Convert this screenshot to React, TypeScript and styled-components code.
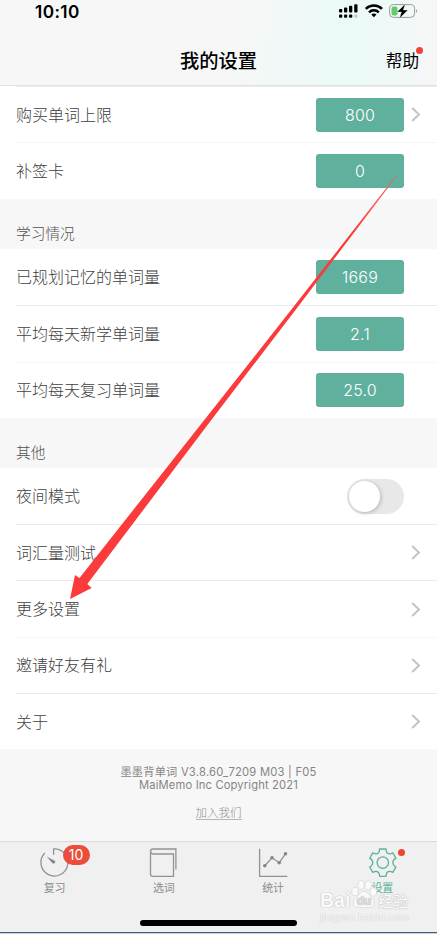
import React from 'react';
import styled, { createGlobalStyle } from 'styled-components';

const GlobalStyle = createGlobalStyle`
  *, *::before, *::after { box-sizing: border-box; }
  body { margin: 0; background: #fff; }
`;

const Screen = styled.div`
  position: relative;
  display: flex;
  flex-direction: column;
  width: 437px;
  height: 934px;
  overflow: hidden;
  background: #fff;
  font-family: Inter, 'Noto Sans CJK SC', sans-serif;
  color: #505050;
`;

const Header = styled.header`
  flex: none;
  height: 86px;
  border-bottom: 1px solid #e2e2e2;
  background: linear-gradient(93deg, #f7f7f7 0%, #f7f7f7 52%, #f1f8f7 65%, #eafaf7 78%, #edf9f7 86%, #f6f7f7 100%);
`;

const StatusBar = styled.div`
  display: flex;
  justify-content: space-between;
  height: 36px;
  padding: 0 19px 0 35px;
`;

const Clock = styled.span`
  font-size: 17.2px;
  line-height: 23px;
  font-weight: 600;
  letter-spacing: 0.4px;
  color: #000;
`;

const StatusIcons = styled.svg`
  display: block;
  width: 80px;
  height: 22px;
`;

const NavBar = styled.div`
  display: grid;
  grid-template-columns: 1fr auto 1fr;
  align-items: center;
  height: 50px;
  padding: 0 18px;
  color: #000;
`;

const Title = styled.h1`
  grid-column: 2;
  margin: 0;
  font-size: 19.3px;
  line-height: 28px;
  font-weight: 500;
`;

const Help = styled.span`
  position: relative;
  justify-self: end;
  font-size: 16.6px;
  line-height: 24px;
`;

const Dot = styled.i<{ $top: number; $right: number }>`
  position: absolute;
  top: ${(p) => p.$top}px;
  right: ${(p) => p.$right}px;
  width: 7px;
  height: 7px;
  border-radius: 50%;
  background: #ee4533;
`;

const Group = styled.section`
  flex: none;
`;

const FirstGroup = styled(Group)`
  padding-bottom: 0.4px;
`;

const GroupHeading = styled.h2`
  display: flex;
  align-items: flex-end;
  height: 49.6px;
  margin: 0;
  padding: 0 16px 4px;
  background: #f7f7f7;
  font-size: 14.7px;
  line-height: 22px;
  font-weight: 300;
`;

const dividers = { none: 'transparent', faint: '#f6f6f6', solid: '#ebebeb' };

const Row = styled.div<{ $divider: keyof typeof dividers }>`
  display: flex;
  align-items: center;
  height: 56.4px;
  margin-left: 16px;
  padding-right: 16px;
  border-top: 1px solid ${(p) => dividers[p.$divider]};
`;

const RowLabel = styled.span`
  flex: 1;
  font-size: 16px;
  line-height: 24px;
  font-weight: 300;
  color: #404040;
`;

const Value = styled.span`
  width: 88px;
  height: 34px;
  border-radius: 3px;
  background: #5fb19e;
  color: #fff;
  font-size: 16px;
  line-height: 34px;
  font-weight: 300;
  letter-spacing: 0.2px;
  text-align: center;
`;

const Switch = styled.span`
  width: 57px;
  height: 35px;
  padding: 2px;
  border-radius: 18px;
  background: #e8e8e8;
`;

const Knob = styled.span`
  display: block;
  width: 31px;
  height: 31px;
  border-radius: 50%;
  background: #fff;
  box-shadow: 1px 1px 4px rgba(0, 0, 0, 0.22);
`;

const Accessory = styled.span`
  display: flex;
  justify-content: flex-end;
  width: 17px;
`;

const Footer = styled.footer`
  flex: none;
  display: flex;
  flex-direction: column;
  align-items: center;
  height: 91.4px;
  padding-top: 16.4px;
  background: #f7f7f7;
  color: #858585;
  font-size: 11.2px;
  line-height: 13px;
`;

const FooterLine = styled.span<{ $spacing: number }>`
  letter-spacing: ${(p) => p.$spacing}px;
  white-space: nowrap;
`;

const JoinLink = styled.a`
  margin-top: 15px;
  border-bottom: 1px solid #b5b5b5;
  color: #8c8c8c;
  font-size: 11.5px;
  line-height: 12.6px;
  font-weight: 300;
`;

const TabBar = styled.nav`
  flex: none;
  display: grid;
  grid-template-columns: repeat(4, 1fr);
  height: 79px;
  border-top: 1px solid #dadada;
  background: #f0f0f0;
`;

const Tab = styled.div<{ $active?: boolean }>`
  display: flex;
  flex-direction: column;
  align-items: center;
  padding-top: 5px;
  color: ${(p) => (p.$active ? '#5bb29d' : '#8c8c8c')};
  font-size: 11px;
  line-height: 16px;
`;

const TabIcon = styled.span`
  position: relative;
  display: block;
  width: 32px;
  height: 33px;

  svg { display: block; }
`;

const Badge = styled.b`
  position: absolute;
  left: 24px;
  top: -2px;
  width: 27px;
  height: 20px;
  border-radius: 10px;
  background: #ec4c3a;
  color: #fff;
  font-size: 14px;
  line-height: 20px;
  font-weight: 400;
  text-align: center;
`;

const HomeArea = styled.div`
  flex: 1;
  padding-left: 140px;
  border-bottom: 1px solid #c3d0e0;
  box-shadow: inset 0 -1px #4c5c70;
  background: #f0f0f0;
`;

const HomeIndicator = styled.div`
  width: 157px;
  height: 6px;
  border-radius: 3px;
  background: #000;
`;

const Watermark = styled.div`
  position: absolute;
  left: 320px;
  top: 880px;
  width: 92px;
  color: #fafafa;
  text-shadow: 0 0 1px #bcbcbc, 0 0 1px #c8c8c8, 0 0 1px #c8c8c8;
`;

const WatermarkBrand = styled.div`
  display: flex;
  align-items: flex-end;
  height: 33px;
  font-family: 'Liberation Sans', sans-serif;
  font-size: 19.5px;
  line-height: 25px;
  font-weight: 700;
`;

const WatermarkPaw = styled.svg`
  flex: none;
  width: 27px;
  height: 30px;
  margin: 0 0 4px;
`;

const WatermarkCn = styled.span`
  margin-left: 1px;
  font-family: 'Noto Sans CJK SC', sans-serif;
  font-size: 15px;
  line-height: 24px;
  font-weight: 500;
`;

const WatermarkUrl = styled.div`
  margin-top: -2px;
  font-family: 'Liberation Sans', sans-serif;
  font-size: 11px;
  line-height: 12px;
  white-space: nowrap;
  color: #f7f7f7;
  text-shadow: 0 0 1px #c8c8c8, 0 0 1px #d4d4d4;
`;

const Arrow = styled.svg`
  position: absolute;
  left: 0;
  top: 0;
  pointer-events: none;
`;

const Chevron = () => (
  <Accessory>
    <svg width="10" height="15" viewBox="0 0 10 15" fill="none" stroke="#c4c4c6" strokeWidth="2">
      <path d="M1.2 1 L8 7.5 L1.2 14" />
    </svg>
  </Accessory>
);

type Item = {
  label: string;
  value?: string;
  toggle?: boolean;
  link?: boolean;
  divider?: keyof typeof dividers;
};

const groups: { title?: string; items: Item[] }[] = [
  {
    items: [
      { label: '购买单词上限', value: '800', link: true, divider: 'solid' },
      { label: '补签卡', value: '0', divider: 'faint' },
    ],
  },
  {
    title: '学习情况',
    items: [
      { label: '已规划记忆的单词量', value: '1669' },
      { label: '平均每天新学单词量', value: '2.1', divider: 'solid' },
      { label: '平均每天复习单词量', value: '25.0', divider: 'faint' },
    ],
  },
  {
    title: '其他',
    items: [
      { label: '夜间模式', toggle: true },
      { label: '词汇量测试', link: true, divider: 'solid' },
      { label: '更多设置', link: true, divider: 'solid' },
      { label: '邀请好友有礼', link: true, divider: 'faint' },
      { label: '关于', link: true, divider: 'solid' },
    ],
  },
];

const SettingRow = ({ item }: { item: Item }) => (
  <Row $divider={item.divider ?? 'none'}>
    <RowLabel>{item.label}</RowLabel>
    {item.value && <Value>{item.value}</Value>}
    {item.toggle && <Switch><Knob /></Switch>}
    {item.link ? <Chevron /> : <Accessory />}
  </Row>
);

const StatusGlyphs = () => (
  <StatusIcons viewBox="338 0 80 22">
    <g>
      <rect x="339" y="9" width="3.3" height="3.6" rx="1" />
      <rect x="344" y="7.4" width="3.3" height="5.2" rx="1" />
      <rect x="349" y="5.8" width="3.3" height="6.8" rx="1" />
      <rect x="354.2" y="4.2" width="3.3" height="8.4" rx="1" />
      <rect x="339" y="14.5" width="3.3" height="3.3" rx="1" />
      <rect x="344" y="14.5" width="3.3" height="3.3" rx="1" />
      <rect x="349" y="14.5" width="3.3" height="3.3" rx="1" />
      <rect x="354.2" y="14.5" width="3.3" height="3.3" rx="1" fill="#c2cdcb" />
    </g>
    <g fill="none" stroke="#000" strokeWidth="2.4">
      <path d="M365.8 8.9 A11.4 11.4 0 0 1 382 8.9" />
      <path d="M369 12.3 A7 7 0 0 1 378.8 12.3" />
    </g>
    <path d="M371.3 14.6 Q373.9 12.4 376.5 14.6 L373.9 17.2 Z" />
    <rect x="389.6" y="4.6" width="25" height="12.8" rx="4" fill="none" stroke="#939b99" />
    <path d="M416 9 Q418 11 416 13 Z" fill="#939b99" />
    <rect x="391.5" y="6.4" width="6" height="9.2" rx="2" fill="#67c96d" />
    <path d="M405.4 3.8 L397 12 H401.4 L399.4 18.4 L408 10 H403.3 Z" stroke="#effaf8" strokeWidth="0.4" />
  </StatusIcons>
);

const TimerIcon = () => (
  <svg width="32" height="33" viewBox="0.6 0 32 33" fill="none" stroke="#929292" strokeWidth="1.3">
    <path d="M6.4 6 A13.5 13.5 0 1 0 15.2 2 V7.7" />
    <path d="M8.2 9.4 L16.7 14 A1.8 1.8 0 0 1 14.4 16.4 Z" fill="#858585" stroke="none" />
  </svg>
);

const BookIcon = () => (
  <svg width="32" height="33" viewBox="0 0 32 33" fill="none" stroke="#929292" strokeWidth="1.3">
    <path d="M4.6 7 H25.5 V29.3 H4.8 Q2.5 29.3 2.5 27 V4.5 Q2.5 2 4.8 2 H27.9 V22.5 M2.7 4.6 Q2.7 6.9 5 6.9" />
  </svg>
);

const ChartIcon = () => (
  <svg width="32" height="33" viewBox="0 0 32 33" fill="none" stroke="#929292" strokeWidth="1.3">
    <path d="M2.6 1.7 V29.3 H30.3" />
    <path d="M7.8 18.7 L15 10.8 L22.2 15.7 L28.5 6.8" />
    <g fill="#858585" stroke="none">
      <circle cx="7.8" cy="18.7" r="1.8" />
      <circle cx="15" cy="10.8" r="1.8" />
      <circle cx="22.2" cy="15.7" r="1.8" />
      <circle cx="28.5" cy="6.8" r="1.8" />
    </g>
  </svg>
);

const GearIcon = () => (
  <svg width="32" height="33" viewBox="-0.8 0 32 33" fill="none" stroke="#5bb29d" strokeWidth="1.3" strokeLinejoin="round">
    <path d="M12.8 2 H19.2 Q19.4 5.6 21 6.4 Q22.9 7.4 26 5.8 L29.1 11.1 Q26 13 26 15.6 Q26 18.2 29.1 20.1 L26 25.4 Q22.9 23.8 21 24.8 Q19.4 25.6 19.2 29.3 H12.8 Q12.6 25.6 11 24.8 Q9.1 23.8 6 25.4 L2.9 20.1 Q6 18.2 6 15.6 Q6 13 2.9 11.1 L6 5.8 Q9.1 7.4 11 6.4 Q12.6 5.6 12.8 2 Z" />
    <circle cx="16" cy="15.6" r="5.7" />
  </svg>
);

export default function App() {
  return (
    <Screen>
      <GlobalStyle />
      <Header>
        <StatusBar>
          <Clock>10:10</Clock>
          <StatusGlyphs />
        </StatusBar>
        <NavBar>
          <Title>我的设置</Title>
          <Help>帮助<Dot $top={-2} $right={-4} /></Help>
        </NavBar>
      </Header>
      {groups.map((group, g) => {
        const Section = g === 0 ? FirstGroup : Group;
        return (
          <Section key={g}>
            {group.title && <GroupHeading>{group.title}</GroupHeading>}
            {group.items.map((item) => (
              <SettingRow key={item.label} item={item} />
            ))}
          </Section>
        );
      })}
      <Footer>
        <FooterLine $spacing={0.24}>墨墨背单词 V3.8.60_7209 M03 | F05</FooterLine>
        <FooterLine $spacing={0.15}>MaiMemo Inc Copyright 2021</FooterLine>
        <JoinLink>加入我们</JoinLink>
      </Footer>
      <TabBar>
        <Tab><TabIcon><TimerIcon /><Badge>10</Badge></TabIcon>复习</Tab>
        <Tab><TabIcon><BookIcon /></TabIcon>选词</Tab>
        <Tab><TabIcon><ChartIcon /></TabIcon>统计</Tab>
        <Tab $active><TabIcon><GearIcon /><Dot $top={2} $right={-7} /></TabIcon>设置</Tab>
      </TabBar>
      <HomeArea><HomeIndicator /></HomeArea>
      <Watermark>
        <WatermarkBrand>
          Bai
          <WatermarkPaw viewBox="0 0 27 30" fill="#fafafa" stroke="#d0d0d0" strokeWidth="0.6">
            <ellipse cx="5" cy="12.5" rx="3.2" ry="4.3" />
            <ellipse cx="11" cy="6" rx="3.2" ry="4.5" />
            <ellipse cx="18.2" cy="6.4" rx="3.2" ry="4.5" />
            <ellipse cx="23.4" cy="13" rx="3.2" ry="4.2" />
            <path d="M14 12.5 C19 12.5 19 17 22.5 20 C26 23 24 28.5 19.5 28.5 H8.5 C3 28.5 2 22.5 5.5 19.8 C9.5 16.8 9 12.5 14 12.5 Z" />
            <text x="14" y="26" textAnchor="middle" fontSize="12" fill="#dedede" stroke="none">du</text>
          </WatermarkPaw>
          <WatermarkCn>经验</WatermarkCn>
        </WatermarkBrand>
        <WatermarkUrl>jingyan.baidu.com</WatermarkUrl>
      </Watermark>
      <Arrow width="437" height="934" viewBox="0 0 437 934">
        <defs>
          <linearGradient id="shaft" gradientUnits="userSpaceOnUse" x1="397" y1="175" x2="355" y2="230">
            <stop offset="0" stopColor="#c97868" />
            <stop offset="0.5" stopColor="#fa5a58" />
            <stop offset="1" stopColor="#fb3b3b" />
          </linearGradient>
        </defs>
        <path d="M396.5 175 L291 310 L204.3 420 L79.5 578 L75 575 L70 599 L91.7 588 L87.3 584 L211.3 420 L295.5 310 L397.3 175.4 Z" fill="url(#shaft)" />
      </Arrow>
    </Screen>
  );
}
